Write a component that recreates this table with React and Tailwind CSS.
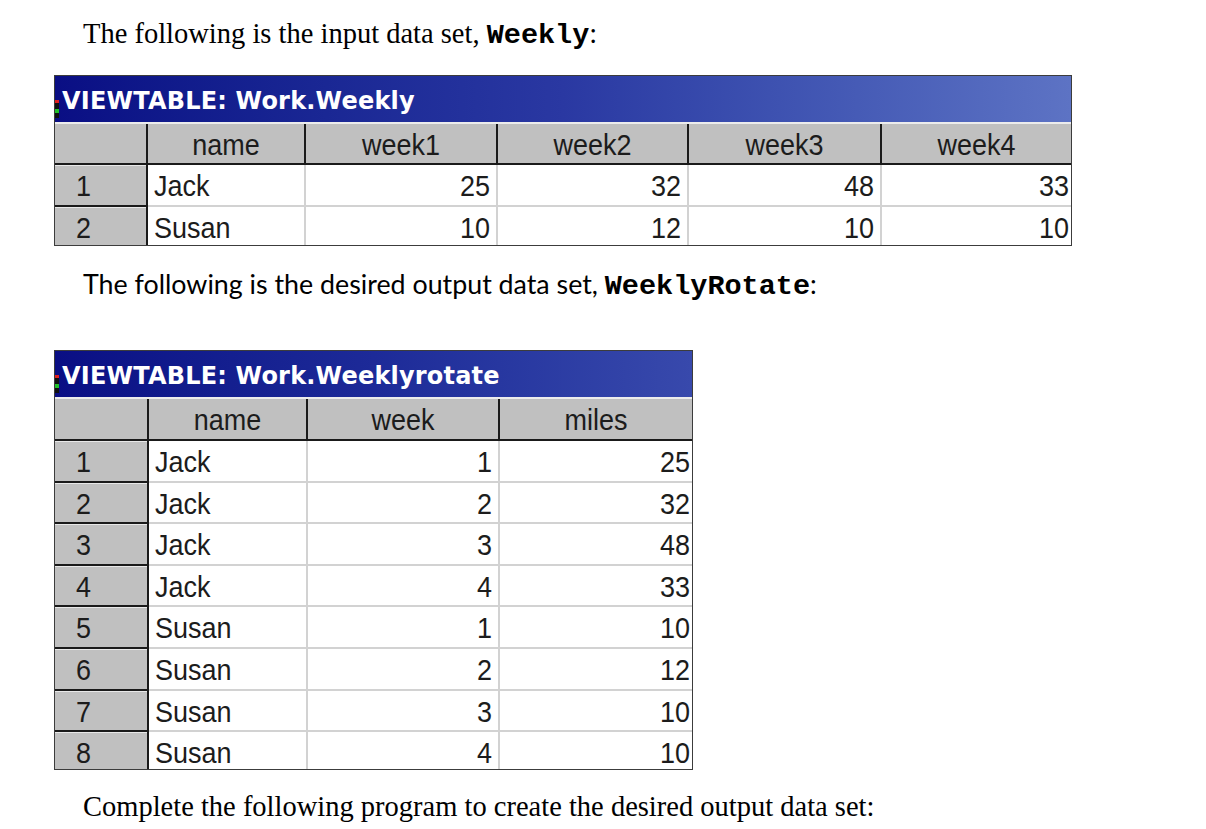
import React from 'react';

const CELL_FONT = "font-['Liberation_Sans',Arial,sans-serif] text-[27px] text-[#1c1c1c]";

const WEEKLY_COLS = [
  { label: 'name', w: 'w-[158px]', num: false },
  { label: 'week1', w: 'w-[192px]', num: true },
  { label: 'week2', w: 'w-[191px]', num: true },
  { label: 'week3', w: 'w-[193px]', num: true },
  { label: 'week4', w: 'w-[189px]', num: true, last: true },
];

const WEEKLY_ROWS = [
  ['Jack', 25, 32, 48, 33],
  ['Susan', 10, 12, 10, 10],
];

const ROTATE_COLS = [
  { label: 'name', w: 'w-[159px]', num: false },
  { label: 'week', w: 'w-[192px]', num: true },
  { label: 'miles', w: 'w-[192px]', num: true, last: true },
];

const ROTATE_ROWS = [
  ['Jack', 1, 25],
  ['Jack', 2, 32],
  ['Jack', 3, 48],
  ['Jack', 4, 33],
  ['Susan', 1, 10],
  ['Susan', 2, 12],
  ['Susan', 3, 10],
  ['Susan', 4, 10],
];

function SasIcon() {
  return (
    <div className="flex flex-col self-end mb-[4px] mr-[3px] w-[4px]">
      <div className="h-[3px] bg-[#e02020]" />
      <div className="h-[6px] bg-[#111]" />
      <div className="h-[4px] bg-[#22c02a]" />
      <div className="h-[5px] bg-[#111]" />
    </div>
  );
}

// bitmap-style viewer text is a little taller than Arial
const Txt = ({ children }) => <span className="inline-block scale-y-[1.12]">{children}</span>;

function ViewTable({ title, cols, rows, rowHead, gradient, rowH, lastH, boxH, headH }) {
  // the viewer window is cut off at the bottom, so the last row is a bit shorter
  return (
    <div className={`flex flex-col w-fit ${boxH} overflow-hidden border border-[#3c3c3c] bg-white`}>
      <div className={`flex h-[46px] shrink-0 items-center ${gradient}`}>
        <SasIcon />
        <span className="font-['DejaVu_Sans',sans-serif] font-bold text-[24px] text-white leading-none tracking-[0.2px] pt-[3px]">
          {title}
        </span>
      </div>
      <div className={`flex ${headH} shrink-0 bg-[#c0c0c0] border-t-2 border-[#ececec] border-b-2 border-b-[#1a1a1a]`}>
        <div className={`${rowHead} border-r-2 border-[#1a1a1a]`} />
        {cols.map(c => (
          <div
            key={c.label}
            className={`${c.w} flex items-center justify-center pt-[3px] ${CELL_FONT} ${c.last ? '' : 'border-r-2 border-[#1a1a1a]'}`}
          >
            <Txt>{c.label}</Txt>
          </div>
        ))}
      </div>
      {rows.map((r, i) => {
        const last = i === rows.length - 1;
        return (
          <div key={i} className={`flex shrink-0 ${last ? lastH : rowH}`}>
            <div
              className={`${rowHead} flex items-center pl-[21px] ${last ? 'pt-[5px]' : 'pt-[3px]'} bg-[#c0c0c0] border-r-2 border-[#1a1a1a] ${last ? '' : 'border-b-2 border-b-[#1a1a1a]'} shadow-[inset_0_1px_0_#e8e8e8] ${CELL_FONT}`}
            >
              <Txt>{i + 1}</Txt>
            </div>
            {cols.map((c, j) => (
              <div
                key={c.label}
                className={`${c.w} flex items-center ${last ? 'pt-[5px]' : 'pt-[3px]'} ${c.num ? 'justify-end' : 'justify-start pl-[6px]'} ${c.num ? (c.last ? 'pr-[2px]' : 'pr-[6px]') : ''} ${c.last ? '' : 'border-r-2 border-[#d2d2d2]'} ${last ? '' : 'border-b-2 border-b-[#d2d2d2]'} ${CELL_FONT}`}
              >
                <Txt>{r[j]}</Txt>
              </div>
            ))}
          </div>
        );
      })}
    </div>
  );
}

export default function App() {
  return (
    <div className="w-[1206px] h-[829px] overflow-hidden bg-white flex flex-col text-black">
      <p className="mt-[18px] ml-[83px] h-[32px] leading-[32px] font-['Liberation_Serif','Times_New_Roman',serif] text-[28.5px]">
        The following is the input data set,{' '}
        <span className="font-['Liberation_Mono','Courier_New',monospace] font-bold">Weekly</span>:
      </p>
      <div className="mt-[25px] ml-[54px]">
        <ViewTable
          title="VIEWTABLE: Work.Weekly"
          cols={WEEKLY_COLS}
          rows={WEEKLY_ROWS}
          rowHead="w-[93px]"
          gradient="bg-linear-to-r from-[#0a0e84] via-[#2a38a2] to-[#5d73c4]"
          rowH="h-[42px]"
          lastH="h-[38px]"
          headH="h-[43px]"
          boxH="h-[171px]"
        />
      </div>
      <p className="mt-[22px] ml-[83px] h-[32px] leading-[32px] font-['Lato','Open_Sans',sans-serif] text-[26.8px]">
        The following is the desired output data set,{' '}
        <span className="font-['Liberation_Mono','Courier_New',monospace] font-bold text-[28.5px]">WeeklyRotate</span>:
      </p>
      <div className="mt-[50px] ml-[54px]">
        <ViewTable
          title="VIEWTABLE: Work.Weeklyrotate"
          cols={ROTATE_COLS}
          rows={ROTATE_ROWS}
          rowHead="w-[94px]"
          gradient="bg-linear-to-r from-[#0a0e84] via-[#1d2a98] to-[#3849ac]"
          rowH="h-[41.6px]"
          lastH="h-[37px]"
          headH="h-[44px]"
          boxH="h-[420px]"
        />
      </div>
      <p className="mt-[21px] ml-[83px] h-[32px] leading-[32px] font-['Liberation_Serif','Times_New_Roman',serif] text-[28.5px]">
        Complete the following program to create the desired output data set:
      </p>
    </div>
  );
}
